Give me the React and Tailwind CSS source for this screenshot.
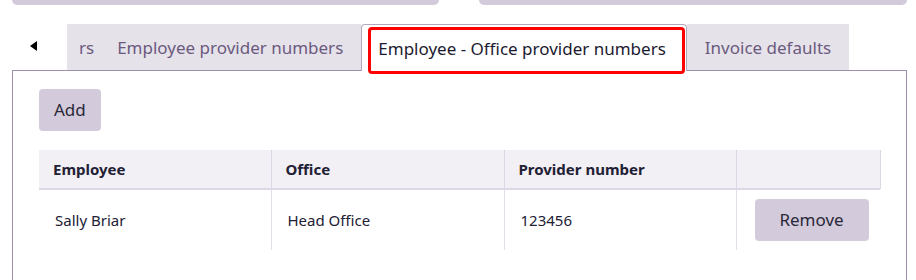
import React from 'react';

const rows = [{ employee: 'Sally Briar', office: 'Head Office', provider: '123456' }];

export default function App() {
  return (
    <div className="w-[916px] h-[280px] bg-white overflow-hidden text-[#222034]" style={{ fontFamily: '"Noto Sans", "Open Sans", sans-serif' }}>
      {/* top inputs, cut off */}
      <div className="flex gap-[40px] pl-[12px] pr-[9px]">
        <div className="w-[427px] h-[5px] bg-[#d3cbdb] rounded-b-[5px]" />
        <div className="flex-1 h-[5px] bg-[#d3cbdb] rounded-b-[5px]" />
      </div>

      {/* tab strip */}
      <div className="mt-[19px] flex items-stretch h-[46px] pl-[12px] pr-[10px]">
        <div className="w-[55px] flex items-center pl-[18px]">
          <span className="-mt-[3px] w-0 h-0 border-y-[5px] border-y-transparent border-r-[7px] border-r-black" />
        </div>
        <div className="flex items-stretch text-[17px]">
          <div className="bg-[#e6e2ea] text-[#6b5a7e] flex items-center pt-[2px] pl-[12px] pr-[23px]">rs</div>
          <div className="bg-[#e6e2ea] text-[#6b5a7e] flex items-center pt-[2px] pr-[18px]">Employee provider numbers</div>
          <div className="relative bg-white border border-b-0 border-[#b3a7c0] rounded-t-[4px] flex items-center pt-[2px] pl-[16px] pr-[20px] z-10 -mb-px text-[#1c1a30]">
            Employee - Office provider numbers
            <div className="absolute left-[6px] right-[1px] top-[2px] bottom-[-3px] border-[3px] border-[#ff0000] rounded-[4px]" />
          </div>
          <div className="bg-[#e6e2ea] text-[#6b5a7e] flex items-center pt-[2px] px-[18px]">Invoice defaults</div>
        </div>
      </div>

      {/* panel */}
      <div className="ml-[12px] mr-[9px] border border-[#9d8fac] h-[240px] pt-[18px] pl-[26px] pr-[26px]">
        <button className="h-[42px] px-[15px] bg-[#d3cbdb] rounded-[4px] text-[17px] text-[#2a2838]">Add</button>

        <table className="mt-[19px] w-[841px] border-collapse text-[15px]">
          <thead>
            <tr className="bg-[#f2eff5] border-b-2 border-[#ddd6e4] shadow-[1px_0_0_#ddd6e4]">
              <th className="h-[39px] w-[232px] text-left font-bold pl-[14px] border-r border-[#ddd6e4]">Employee</th>
              <th className="w-[233px] text-left font-bold pl-[14px] border-r border-[#ddd6e4]">Office</th>
              <th className="w-[232px] text-left font-bold pl-[14px] border-r border-[#ddd6e4]">Provider number</th>
              <th />
            </tr>
          </thead>
          <tbody>
            {rows.map((r) => (
              <tr key={r.provider}>
                <td className="h-[61px] pl-[16px] border-r border-[#e4dfe9]">{r.employee}</td>
                <td className="pl-[16px] border-r border-[#e4dfe9]">{r.office}</td>
                <td className="pl-[16px] border-r border-[#e4dfe9]">{r.provider}</td>
                <td className="pl-[18px]">
                  <button className="h-[42px] w-[114px] bg-[#d3cbdb] rounded-[4px] text-[17px] text-[#2a2838]">Remove</button>
                </td>
              </tr>
            ))}
          </tbody>
        </table>
      </div>
    </div>
  );
}
